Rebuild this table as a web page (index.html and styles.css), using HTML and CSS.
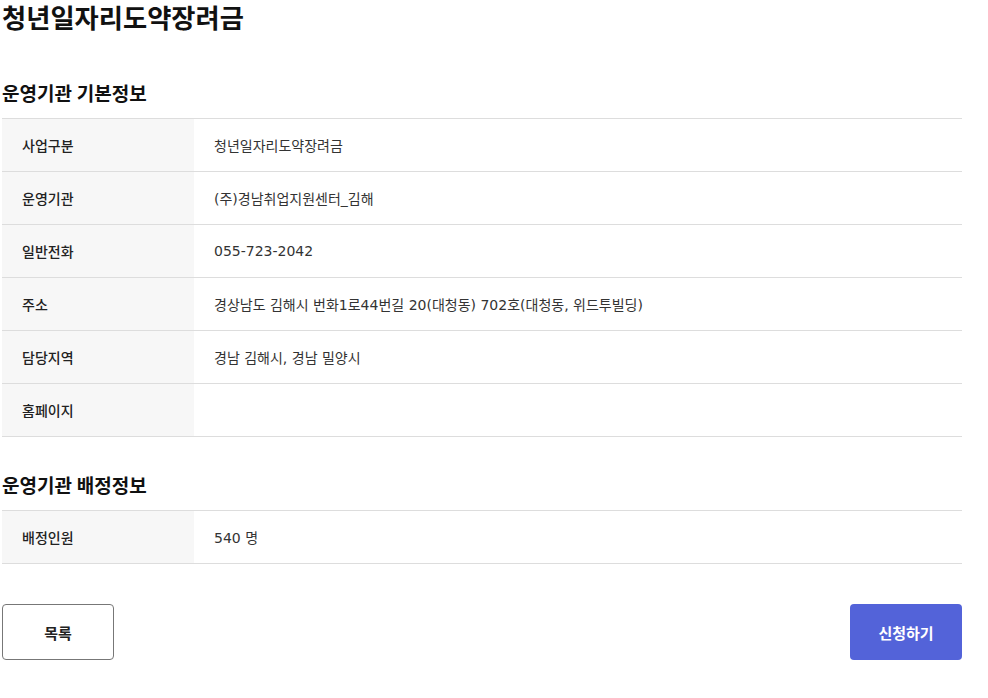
FILE: index.html
```html
<!DOCTYPE html>
<html lang="ko">
<head>
    <meta charset="UTF-8">
    <link rel="stylesheet" href="styles.css">
</head>
<body>
    <div class="wrap">
        <h1 class="pageTitle">청년일자리도약장려금</h1>

        <h2 class="secTitle first">운영기관 기본정보</h2>
        <table class="infoTable">
            <tr><th>사업구분</th><td>청년일자리도약장려금</td></tr>
            <tr><th>운영기관</th><td>(주)경남취업지원센터_김해</td></tr>
            <tr><th>일반전화</th><td>055-723-2042</td></tr>
            <tr><th>주소</th><td>경상남도 김해시 번화1로44번길 20(대청동) 702호(대청동, 위드투빌딩)</td></tr>
            <tr><th>담당지역</th><td>경남 김해시, 경남 밀양시</td></tr>
            <tr><th>홈페이지</th><td></td></tr>
        </table>

        <h2 class="secTitle">운영기관 배정정보</h2>
        <table class="infoTable">
            <tr><th>배정인원</th><td>540 명</td></tr>
        </table>

        <div class="btnRow">
            <a class="btn btnLine" href="#">목록</a>
            <a class="btn btnBlue" href="#">신청하기</a>
        </div>
    </div>
</body>
</html>
```

FILE: styles.css
```css
body{margin: 0;font-family: "Noto Sans", "Noto Sans CJK KR", sans-serif;color: #111;background: #fff;}
.wrap{width: 960px;padding-left: 2px;}
.pageTitle{margin: 0;font-size: 26.3px;line-height: 36px;font-weight: 700;color: #111;}
.secTitle{margin: 35px 0 10px;font-size: 19px;line-height: 28px;font-weight: 700;color: #111;}
.secTitle.first{margin-top: 44px;}
.infoTable{width: 100%;border-collapse: collapse;border-spacing: 0;border-top: 1px solid #ddd;}
.infoTable tr{height: 53px;border-bottom: 1px solid #ddd;}
.infoTable th{width: 172px;padding: 0 0 0 20px;background: #f7f7f7;text-align: left;font-size: 14px;font-weight: 500;color: #222;}
.infoTable td{padding: 0 20px;font-family: "DejaVu Sans", "Noto Sans CJK KR", sans-serif;font-size: 14px;font-weight: 400;color: #333;}
.btnRow{display: flex;justify-content: space-between;margin-top: 40px;}
.btn{display: flex;align-items: center;justify-content: center;width: 112px;height: 56px;box-sizing: border-box;border-radius: 4px;font-size: 15px;font-weight: 700;text-decoration: none;}
.btnLine{border: 1px solid #777;color: #222;background: #fff;}
.btnBlue{background: #5363d9;color: #fff;}
```
